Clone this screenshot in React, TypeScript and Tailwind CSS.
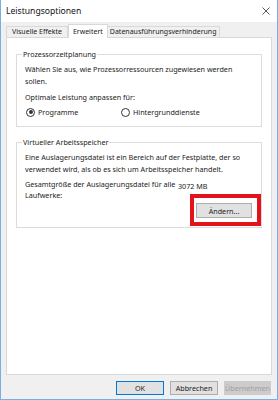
import React from "react";

const font = { fontFamily: '"Noto Sans", "Open Sans", sans-serif' };

function Radio({ checked, label }: { checked?: boolean; label: string }) {
  return (
    <label className="flex items-center gap-[3px]">
      <span className="flex h-[9px] w-[9px] items-center justify-center rounded-full border border-[#333] bg-white">
        {checked && <span className="h-[4px] w-[4px] rounded-full bg-[#333]" />}
      </span>
      <span>{label}</span>
    </label>
  );
}

export default function App() {
  return (
    <div
      className="flex h-[400px] w-[278px] flex-col border border-t-0 border-[#7aaee0] bg-[#f0f0f0] text-[7.2px] leading-[12px] text-[#222]"
      style={font}
    >
      {/* title bar */}
      <div className="flex h-[22px] items-center justify-between bg-white pl-[5px] pr-[6px]">
        <span className="text-[8.6px] text-[#111]">Leistungsoptionen</span>
        <svg width="8" height="8" viewBox="0 0 8 8" className="mr-[1px]">
          <path d="M0.5 0.5L7.5 7.5M7.5 0.5L0.5 7.5" stroke="#444" strokeWidth="0.9" />
        </svg>
      </div>

      <div className="flex flex-1 flex-col px-[5px] pt-[2px]">
        {/* tabs */}
        <div className="flex h-[13px] items-end whitespace-nowrap text-[7px]">
          <div className="flex h-[11px] items-center border border-b-0 border-[#d9d9d9] bg-[#f0f0f0] px-[5px]">
            Visuelle Effekte
          </div>
          <div className="relative z-10 -mb-[1px] flex h-[14px] items-center border border-b-0 border-[#d9d9d9] bg-white px-[4px]">
            Erweitert
          </div>
          <div className="flex h-[11px] items-center border border-b-0 border-l-0 border-[#d9d9d9] bg-[#f0f0f0] px-[2px]">
            Datenausführungsverhinderung
          </div>
        </div>

        {/* panel */}
        <div className="flex h-[338px] flex-col border border-[#d9d9d9] bg-white px-[9px] pt-[10px]">
          <fieldset className="border border-[#dcdcdc] px-[8px] pb-[8px] pt-0">
            <legend className="ml-[-3px] px-[1px]">Prozessorzeitplanung</legend>
            <p className="mt-[3px]">Wählen Sie aus, wie Prozessorressourcen zugewiesen werden sollen.</p>
            <p className="mt-[4px]">Optimale Leistung anpassen für:</p>
            <div className="mt-[3px] flex pl-[1px]">
              <div className="w-[95px]">
                <Radio checked label="Programme" />
              </div>
              <Radio label="Hintergrunddienste" />
            </div>
          </fieldset>

          <fieldset className="mt-[9px] border border-[#dcdcdc] pb-[1px] pl-[8px] pr-0 pt-0">
            <legend className="ml-[-3px] px-[1px]">Virtueller Arbeitsspeicher</legend>
            <p className="mt-[3px] pr-[8px]">
              Eine Auslagerungsdatei ist ein Bereich auf der Festplatte, der so verwendet wird, als ob es sich um Arbeitsspeicher handelt.
            </p>
            <div className="mt-[4px] flex leading-[11px]">
              <p className="w-[153px] shrink-0 whitespace-nowrap">
                Gesamtgröße der Auslagerungsdatei für alle
                <br />
                Laufwerke:
              </p>
              <p className="mt-[2px] whitespace-nowrap">3072 MB</p>
            </div>
            <div className="-mt-[7px] flex justify-end">
              <div className="border-[4px] border-[#e3131b] pb-[4px] pl-[2px] pr-[5px] pt-[5px]">
                <button className="flex h-[15px] w-[56px] items-center justify-center border border-[#adadad] bg-[#e1e1e1]">
                  Ändern...
                </button>
              </div>
            </div>
          </fieldset>
        </div>

        {/* buttons */}
        <div className="flex justify-end gap-[6px] pr-[1px] pt-[6px]">
          <button className="h-[14px] w-[48px] border border-[#0078d7] bg-[#e1e1e1]">OK</button>
          <button className="h-[14px] w-[48px] border border-[#adadad] bg-[#e1e1e1]">Abbrechen</button>
          <button className="h-[14px] w-[47px] border border-[#cccccc] bg-[#cccccc] text-[#a0a0a0]">Übernehmen</button>
        </div>
      </div>
    </div>
  );
}
